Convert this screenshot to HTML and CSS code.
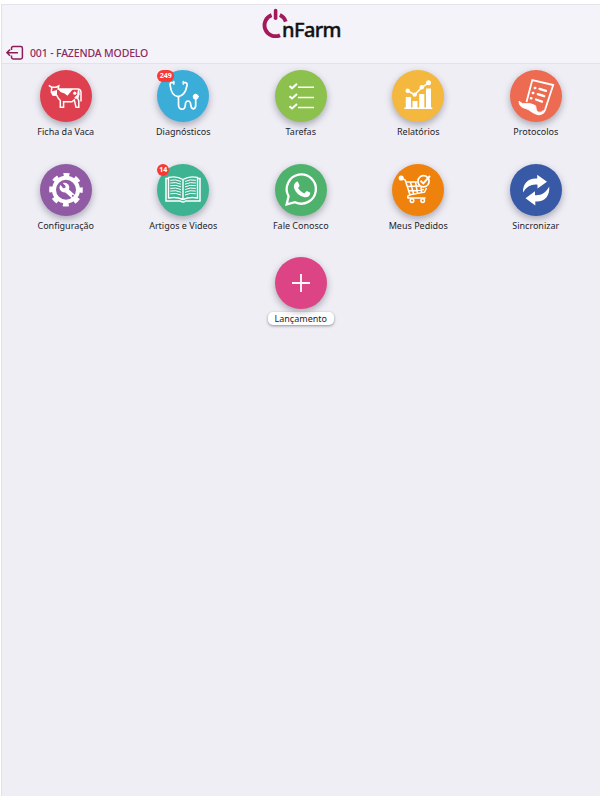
FILE: index.html
```
<!DOCTYPE html>
<html lang="pt-BR">
<head>
    <meta charset="UTF-8">
    <meta name="viewport" content="width=device-width, initial-scale=1.0">
    <title>OnFarm</title>
    <link rel="stylesheet" href="styles.css">
</head>
<body>
    <div class="app">
        <header class="header">
            <div class="logo">
                <svg class="logo-mark" width="28" height="30" viewBox="0 0 28 30">
                    <path d="M9.6 7.1A10.9 10.9 0 1 0 18 27.2" fill="none" stroke="#a3195b" stroke-width="3.9"/>
                    <path d="M17.8 7A10.9 10.9 0 0 1 23.8 13.6" fill="none" stroke="#a3195b" stroke-width="3.7"/>
                    <path d="M13.6 2.6v7.6" stroke="#a3195b" stroke-width="3.6" stroke-linecap="round"/>
                </svg>
                <span class="logo-text">nFarm</span>
            </div>
            <div class="farm">
                <svg width="18" height="16" viewBox="0 0 18 16" fill="none" stroke="#8c1d56" stroke-width="1.5">
                    <path d="M5.5 5V3.2Q5.5 1.5 7.2 1.5H14.8Q16.4 1.5 16.4 3.2V12.3Q16.4 14 14.8 14H7.2Q5.5 14 5.5 12.3V10.5"/>
                    <path d="M12 7.7H1M4 4.6L.9 7.7L4 10.8"/>
                </svg>
                <span class="farm-name">001 - FAZENDA MODELO</span>
            </div>
        </header>

        <main class="menu">
            <a class="item">
                <span class="circle red">
                    <svg viewBox="0 0 52 52" fill="none" stroke="#fff" stroke-width="1.5">
                        <path d="M8.8 15.3L11.5 17.2H16.2L18.8 15.8L18.2 19H37.5Q40.8 19 41 22.5V31.5"/>
                        <path d="M11.8 17.5L11.3 22L13 25H16.5L18.5 28.5L20.3 30.5V37.3H23.6V31.8H32L34.3 29.8L36 37.3H38.8V31L37.6 28L39 23.5"/>
                        <path d="M11.5 21.5L17 20V23.5L15.8 25.5H12.8Z" fill="#fff" stroke="none"/>
                        <path d="M18 19H33L30.5 22L27.5 25.8L24.5 23.4L20.5 22Z" fill="#fff" stroke="none"/>
                        <path d="M38 19.5Q40 20 39.5 24L37.8 28.5L35.5 29L34.3 27.5L37 25Z" fill="#fff" stroke="none"/>
                        <circle cx="34.8" cy="23.2" r="1.6" fill="#fff" stroke="none"/>
                    </svg>
                </span>
                <span class="label">Ficha da Vaca</span>
            </a>
            <a class="item">
                <span class="circle blue">
                    <svg viewBox="0 0 52 52" fill="none" stroke="#fff" stroke-width="1.7" stroke-linecap="round">
                        <path d="M16.8 11.5V14M16.8 12.6H14.5Q12.6 12.8 13.2 15.5C13.8 21 16.5 26 21 26.7C26 26 29 21 30 15.5Q30.5 12.8 28.5 12.6H26.3M26.3 11.5V14"/>
                        <path d="M21.5 27V35Q21.8 39.2 25 39.2Q28.2 39.2 28.3 35Q28.4 31 31 31Q33.5 31 33.8 35Q34.2 39 36.5 38.8Q38.7 38.5 38.7 35V29"/>
                        <circle cx="38.7" cy="26.7" r="2.5" fill="#fff" stroke-width="1"/>
                    </svg>
                    <span class="badge">249</span>
                </span>
                <span class="label">Diagnósticos</span>
            </a>
            <a class="item">
                <span class="circle green">
                    <svg viewBox="0 0 52 52" fill="none" stroke="#fff" stroke-width="1.5">
                        <path d="M23 17.2H39M23 27.4H39M23 37.4H39"/>
                        <path d="M14.5 16L17 18.3L22 13.8M14.5 26.2L17 28.5L22 24M14.5 36.2L17 38.5L22 34" stroke-width="2"/>
                    </svg>
                </span>
                <span class="label">Tarefas</span>
            </a>
            <a class="item">
                <span class="circle yellow">
                    <svg viewBox="0 0 52 52" fill="#fff">
                        <path d="M13.8 27H19V37.5H20.5V31H25.5V37.5H27.2V24H32.3V37.5H34V18.5H39V37.5H40.3V39H12.3V37.5H13.8Z"/>
                        <path d="M15.7 20.8L22.7 24.8L29.8 17.3L36.5 13" fill="none" stroke="#fff" stroke-width="1.6"/>
                        <circle cx="15.7" cy="20.8" r="2.2"/>
                        <circle cx="22.7" cy="24.6" r="2.2"/>
                        <circle cx="29.8" cy="17.3" r="2.2"/>
                        <circle cx="36.5" cy="12.8" r="2.5"/>
                    </svg>
                </span>
                <span class="label">Relatórios</span>
            </a>
            <a class="item">
                <span class="circle coral">
                    <svg viewBox="0 0 52 52" fill="none" stroke="#fff" stroke-width="1.8">
                        <path d="M16.5 32L22.3 10L43.2 15L35 40Q33.5 44 29.5 44"/>
                        <path d="M9 31.3Q12.5 34.8 16 33.7Q20.5 32.8 25.3 35.6C26.3 36.5 25.4 41 28.5 42.2Q31.5 43 33.3 40.5Q33 44.8 28.5 44.8C22 43.5 20 39.5 15 38.3Q9.2 37 9 31.3Z" fill="#fff" stroke-width="1"/>
                        <path d="M29.5 18.9L36 20.8M27.8 24.1L34.2 26.2M26 29.5L32 31.7" stroke-width="2.3" stroke-linecap="round"/>
                        <path d="M24.8 18h.5M22.8 23h.5M20.9 28.2h.5" stroke-width="2.4" stroke-linecap="round"/>
                    </svg>
                </span>
                <span class="label">Protocolos</span>
            </a>

            <a class="item">
                <span class="circle purple">
                    <svg viewBox="0 0 52 52">
                        <circle cx="26" cy="25.7" r="12" fill="none" stroke="#fff" stroke-width="4"/>
                        <circle cx="26" cy="25.7" r="14.8" fill="none" stroke="#fff" stroke-width="4" stroke-dasharray="5.8 5.824" stroke-dashoffset="2.9"/>
                        <path d="M26 26L32.8 32" stroke="#fff" stroke-width="4.4" stroke-linecap="round"/>
                        <circle cx="24.4" cy="23.6" r="4.9" fill="#fff"/>
                        <path d="M19.6 19.9L21.8 18.1L25.6 21.9L25.2 23.9L23.2 24.3Z" fill="#915aa4"/>
                        <circle cx="32.8" cy="31.8" r="1" fill="#915aa4"/>
                    </svg>
                </span>
                <span class="label">Configuração</span>
            </a>
            <a class="item">
                <span class="circle teal">
                    <svg viewBox="0 0 52 52" fill="none" stroke="#fff">
                        <path d="M11.5 14.5H9V37H23.5Q26 39 28.5 37H43V14.5H40.5" stroke-width="1.5"/>
                        <path d="M26 15.5Q19.5 11.5 11.5 13.5V34Q19.5 32.5 26 35.5Q32.5 32.5 40.5 34V13.5Q32.5 11.5 26 15.5V36" stroke-width="1.4"/>
                        <path d="M13.2 16.3Q19 15 24 17.5M13.2 19Q19 17.7 24 20.2M13.2 21.7Q19 20.4 24 22.9M13.2 24.4Q19 23.1 24 25.6M13.2 27.1Q19 25.8 24 28.3M13.2 29.8Q19 28.5 24 31M38.8 16.3Q33 15 28 17.5M38.8 19Q33 17.7 28 20.2M38.8 21.7Q33 20.4 28 22.9M38.8 24.4Q33 23.1 28 25.6M38.8 27.1Q33 25.8 28 28.3M38.8 29.8Q33 28.5 28 31"/>
                    </svg>
                    <span class="badge small">14</span>
                </span>
                <span class="label">Artigos e Videos</span>
            </a>
            <a class="item">
                <span class="circle whats">
                    <svg viewBox="0 0 52 52">
                        <path d="M11.6 40.4L13.6 32.2A14.6 14.6 0 1 1 20 38.2Z" fill="none" stroke="#fff" stroke-width="2.3"/>
                        <path d="M21.5 17.7Q22.8 17.2 23.3 18.5L24.5 21.4Q24.8 22.3 23 24.1Q25.2 28 29.2 29.6L31.2 27.4Q31.8 26.8 32.8 27.4L35 28.6Q35.6 29.2 34.8 31Q33.2 34 29.6 33.2Q21.5 31.5 19 24Q18.2 20 21.5 17.7Z" fill="#fff"/>
                    </svg>
                </span>
                <span class="label">Fale Conosco</span>
            </a>
            <a class="item">
                <span class="circle orange">
                    <svg viewBox="0 0 52 52" fill="none" stroke="#fff" stroke-width="1.5">
                        <circle cx="9.2" cy="14" r="1.8" fill="#fff"/>
                        <path d="M9.5 14.2L13.2 16L18 31Q15 31.5 16 34H33.5M18 30.8L32.5 28.2L34.5 24M13.5 18H25M15 22.5L28 22M16.5 27L32 25.5M18.5 18L21.5 30M23.5 18L25.5 29.5M29 23L29.5 28.5"/>
                        <circle cx="31.5" cy="17.3" r="5.6" stroke-width="1.7"/>
                        <path d="M28.5 16.8L31.3 19.5L38 12" stroke-width="1.9"/>
                        <circle cx="20" cy="36.6" r="1.8"/>
                        <circle cx="30.7" cy="36.6" r="1.8"/>
                    </svg>
                </span>
                <span class="label">Meus Pedidos</span>
            </a>
            <a class="item">
                <span class="circle navy">
                    <svg viewBox="0 0 52 52" fill="#fff">
                        <path d="M13 28.5C12.5 20 18 13.8 27.2 14.5V10.8L37 17.7L27.5 24.6V20.7C21 20 16.5 23 13 28.5Z"/>
                        <path d="M39.2 22.5C40 32 34.5 38.2 25.3 37.5V41.5L15.5 34.2L25 27.3V31.2C31.5 31.7 36 28.5 39.2 22.5Z"/>
                    </svg>
                </span>
                <span class="label">Sincronizar</span>
            </a>

            <a class="item center">
                <span class="circle pink">
                    <svg viewBox="0 0 52 52">
                        <path d="M26 17V35M17 26H35" stroke="#fff" stroke-width="1.8"/>
                    </svg>
                </span>
                <span class="label pill">Lançamento</span>
            </a>
        </main>
    </div>
</body>
</html>
```
FILE: styles.css
```
* {
    box-sizing: border-box;
}
body {
    margin: 0;
    background-color: #fff;
    font-family: "Noto Sans", "Open Sans", sans-serif;
}
.app {
    height: 792px;
    margin: 4px 0 4px 1px;
    background-color: #efeef5;
    border-left: 1px solid #e2e1e9;
    border-top: 1px solid #e5e4ea;
}
.header {
    height: 59px;
    background-color: #f4f3f9;
    border-bottom: 1px solid #e3e2e9;
}
.logo {
    display: flex;
    height: 36px;
    padding: 3px 0 0 260px;
}
.logo-mark {
    flex: none;
}
.logo-text {
    margin: 9px 0 0 -8px;
    color: #111;
    font-size: 20px;
    font-weight: 500;
    line-height: 26px;
    letter-spacing: -0.6px;
    -webkit-text-stroke: 0.4px #111;
}
.farm {
    display: flex;
    align-items: center;
    gap: 6px;
    height: 23px;
    padding-left: 4px;
}
.farm-name {
    color: #8c2b60;
    font-size: 10.5px;
    font-weight: 500;
    line-height: 16px;
    letter-spacing: -0.15px;
}
.menu {
    display: grid;
    grid-template-columns: repeat(5, 117.5px);
    grid-auto-rows: 93.5px;
    padding: 6px 0 0 5px;
}
.item {
    display: flex;
    flex-direction: column;
    align-items: center;
    color: #242428;
}
.center {
    grid-column: 3;
}
.circle {
    position: relative;
    width: 52px;
    height: 52px;
    border-radius: 50%;
    box-shadow: 0 3px 7px rgba(60, 60, 80, 0.4);
}
.circle svg {
    display: block;
    width: 52px;
    height: 52px;
}
.label {
    margin-top: 3px;
    font-size: 9px;
    line-height: 14px;
    white-space: nowrap;
}
.pill {
    padding: 0 7px;
    background-color: #fff;
    border-radius: 5px;
    line-height: 13px;
    box-shadow: 0 1px 3px rgba(0, 0, 0, 0.4);
}
.badge {
    position: absolute;
    top: 0;
    left: 0;
    width: 17px;
    height: 12px;
    border-radius: 6px;
    background-color: #f83a37;
    color: #fff;
    font-size: 7px;
    font-weight: bold;
    line-height: 12px;
    text-align: center;
}
.badge.small {
    width: 12px;
}
.red { background-color: #df404f; }
.blue { background-color: #3badd9; }
.green { background-color: #8bc14c; }
.yellow { background-color: #f5b83f; }
.coral { background-color: #ed6b50; }
.purple { background-color: #915aa4; }
.teal { background-color: #3db391; }
.whats { background-color: #4fb26c; }
.orange { background-color: #ef820d; }
.navy { background-color: #3859a5; }
.pink { background-color: #dd4485; }
```
